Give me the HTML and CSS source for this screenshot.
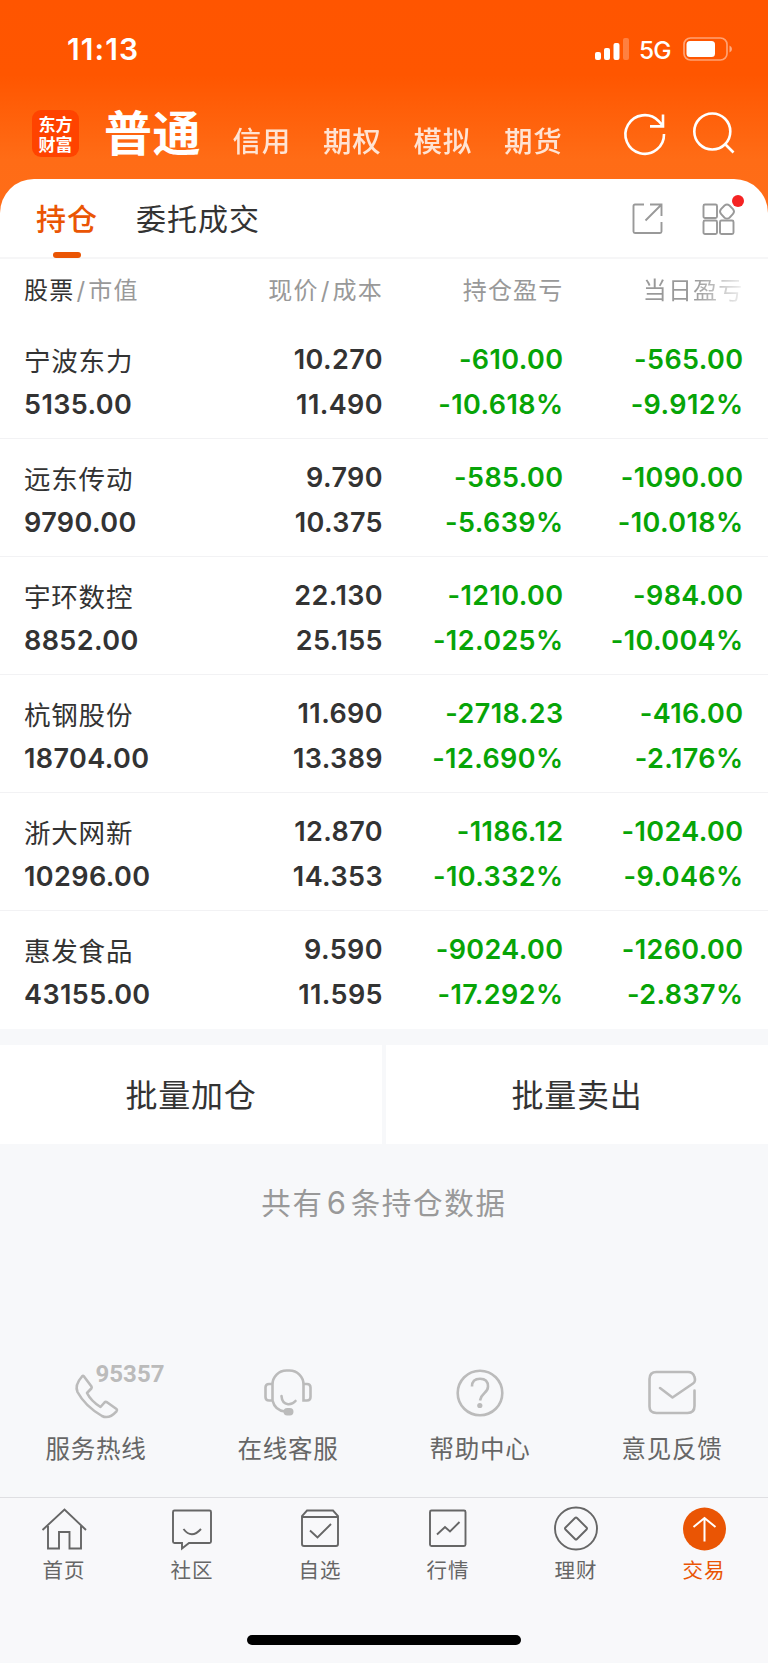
FILE: index.html
```html
<!DOCTYPE html>
<html lang="zh-CN">
<head>
<meta charset="utf-8">
<title>持仓</title>
<link rel="stylesheet" href="styles.css">
</head>
<body>
<header class="hero">
  <div class="status">
    <span class="clock">11:13</span>
    <svg class="signal" width="34" height="24" viewBox="0 0 34 24" fill="#fff"><rect x="0" y="15" width="6" height="8" rx="2"/><rect x="9" y="11" width="6" height="12" rx="2"/><rect x="18.500" y="6" width="6" height="17" rx="2"/><rect x="28" y="1" width="6" height="22" rx="2" opacity=".25"/></svg>
    <span class="net">5G</span>
    <svg class="battery" width="50" height="24" viewBox="0 0 50 24"><rect x="1" y="1" width="43" height="22" rx="6.500" fill="none" stroke="#fff" stroke-width="1.700" opacity=".45"/><rect x="3.500" y="4" width="28.500" height="16" rx="3.500" fill="#fff"/><path d="M46.500 8.500Q49 9.500 49 12T46.500 15.500Z" fill="#fff" opacity=".5"/></svg>
  </div>
  <nav class="accounts">
    <div class="brand"><span>东方</span><span>财富</span></div>
    <span class="account current">普通</span>
    <span class="account">信用</span>
    <span class="account">期权</span>
    <span class="account">模拟</span>
    <span class="account">期货</span>
    <svg class="refresh" width="42" height="42" viewBox="0 0 42 42" fill="none" stroke="#fff" stroke-width="2.600"><path d="M40 21A19.300 19.300 0 1 1 34.500 8L39 13M39 1.500V13.400H26"/></svg>
    <svg class="search" width="42" height="42" viewBox="0 0 42 42" fill="none" stroke="#fff" stroke-width="2.600"><circle cx="19.300" cy="19.500" r="18"/><path d="M32 32L40.500 40.500"/></svg>
  </nav>
</header>
<main class="sheet">
  <div class="tabs">
    <span class="tab active">持仓</span>
    <span class="tab">委托成交</span>
    <svg class="export" width="32" height="32" viewBox="0 0 32 32" fill="none" stroke="#999" stroke-width="1.900"><path d="M12 1.500H3Q1.500 1.500 1.500 3V28.500Q1.500 30 3 30H28Q29.500 30 29.500 28.500V19M18 1.500H29.500V13M29.500 1.500L13.500 17.500"/></svg>
    <div class="widgets">
      <svg width="34" height="34" viewBox="0 0 34 34" fill="none" stroke="#999" stroke-width="1.900"><rect x="1.500" y="2.500" width="13.500" height="13.500" rx="1.500"/><rect x="1.500" y="18.500" width="13.500" height="13.500" rx="1.500"/><rect x="18" y="18.500" width="13.500" height="13.500" rx="1.500"/><path d="M22.500 3.500Q25 1.500 27.500 3.500L31 7.200Q33 9.500 31 12L27.500 15.700Q25 17.500 22.500 15.700L19 12Q17 9.500 19 7.200Z"/></svg>
      <i class="dot"></i>
    </div>
  </div>
  <div class="grid head">
    <span><b>股票</b><i>/</i>市值</span><span>现价<i>/</i>成本</span><span>持仓盈亏</span><span class="fade">当日盈亏</span>
  </div>
  <div class="grid row"><div><p class="name">宁波东力</p><p>5135.00</p></div><div><p>10.270</p><p>11.490</p></div><div class="loss"><p>-610.00</p><p>-10.618%</p></div><div class="loss"><p>-565.00</p><p>-9.912%</p></div></div>
  <div class="grid row"><div><p class="name">远东传动</p><p>9790.00</p></div><div><p>9.790</p><p>10.375</p></div><div class="loss"><p>-585.00</p><p>-5.639%</p></div><div class="loss"><p>-1090.00</p><p>-10.018%</p></div></div>
  <div class="grid row"><div><p class="name">宇环数控</p><p>8852.00</p></div><div><p>22.130</p><p>25.155</p></div><div class="loss"><p>-1210.00</p><p>-12.025%</p></div><div class="loss"><p>-984.00</p><p>-10.004%</p></div></div>
  <div class="grid row"><div><p class="name">杭钢股份</p><p>18704.00</p></div><div><p>11.690</p><p>13.389</p></div><div class="loss"><p>-2718.23</p><p>-12.690%</p></div><div class="loss"><p>-416.00</p><p>-2.176%</p></div></div>
  <div class="grid row"><div><p class="name">浙大网新</p><p>10296.00</p></div><div><p>12.870</p><p>14.353</p></div><div class="loss"><p>-1186.12</p><p>-10.332%</p></div><div class="loss"><p>-1024.00</p><p>-9.046%</p></div></div>
  <div class="grid row"><div><p class="name">惠发食品</p><p>43155.00</p></div><div><p>9.590</p><p>11.595</p></div><div class="loss"><p>-9024.00</p><p>-17.292%</p></div><div class="loss"><p>-1260.00</p><p>-2.837%</p></div></div>
</main>
<div class="batch"><span>批量加仓</span><span>批量卖出</span></div>
<p class="summary">共有<span>6</span>条持仓数据</p>
<section class="services">
  <div class="service">
    <svg class="hotline" width="92" height="60" viewBox="0 0 92 60" fill="none" stroke="#bbb" stroke-width="2.600" stroke-linejoin="round"><path d="M7 18.500Q8 17.500 9 18.500L16.500 28.500Q17 29.500 16.300 30.500L12 35Q16 43 25.500 49L29.500 44.500Q30.500 43.500 32 44.200L41.500 51Q42.500 52 41.500 53.300Q34 61.500 27 58Q10 48 2.500 34Q-.5 27 7 18.500Z"/><text class="phone-no" x="20.500" y="24" textLength="69">95357</text></svg>
    <span>服务热线</span>
  </div>
  <div class="service">
    <svg width="50" height="50" viewBox="0 0 50 50" fill="none" stroke="#bbb" stroke-width="2.600"><path d="M9.500 32.500V16.500A14 14 0 0 1 23.500 2.500H26.500A14 14 0 0 1 40.500 16.500V32.500H44Q47.500 32.500 47.500 29V19.500Q47.500 16 44 16H40.500M9.500 16H6Q2.500 16 2.500 19.500V29Q2.500 32.500 6 32.500H9.500Q12 42.500 22 43.500"/><path d="M18.500 28Q19 35.500 25 36.200Q29.500 36.500 32.500 33" stroke-linecap="round"/><rect x="20.500" y="40" width="10" height="7.500" rx="3.700" fill="#bbb" stroke="none"/></svg>
    <span>在线客服</span>
  </div>
  <div class="service">
    <svg width="50" height="50" viewBox="0 0 50 50" fill="none" stroke="#bbb" stroke-width="2.600"><circle cx="25" cy="25" r="22.300"/><path d="M17 18.500Q17 10.800 25 10.800T33 18.500Q33 22 29.500 25T25 32.500"/><circle cx="24.800" cy="37.500" r="2.600" fill="#bbb" stroke="none"/></svg>
    <span>帮助中心</span>
  </div>
  <div class="service">
    <svg width="50" height="50" viewBox="0 0 50 50" fill="none" stroke="#bbb" stroke-width="2.600" stroke-linecap="round" stroke-linejoin="round"><path d="M13 20L25.500 29.500L46 15.500Q49 13.500 47.500 9Q46 4 41 4H9.500Q2.500 4 2.500 11V38.500Q2.500 45 9.500 45H40.500Q47.500 45 47.500 38V22.500"/></svg>
    <span>意见反馈</span>
  </div>
</section>
<footer class="dock">
  <nav class="dock-items">
    <div class="item"><svg width="46" height="46" viewBox="0 0 46 46"><path d="M1.500 24L23.500 3.500L45 24M7 20V42.500H18V26H28.500V42.500H40V20"/></svg><span>首页</span></div>
    <div class="item"><svg width="46" height="46" viewBox="0 0 46 46"><path d="M5.500 4.500H40.500Q42 4.500 42 6V35.500Q42 37 40.500 37H20L13 42.500V37H5.500Q4 37 4 35.500V6Q4 4.500 5.500 4.500Z"/><path d="M14.500 23Q22.500 33.500 32 23"/></svg><span>社区</span></div>
    <div class="item"><svg width="46" height="46" viewBox="0 0 46 46"><path d="M10 4.500H36L41 10V38Q41 40 39 40H7Q5 40 5 38V10ZM5 11H41M13 24.500L20.500 31.500L34 18"/></svg><span>自选</span></div>
    <div class="item"><svg width="46" height="46" viewBox="0 0 46 46"><rect x="5" y="4.500" width="35.500" height="35.500" rx="1.500"/><path d="M12 28.500L20 21L25 25.500L34.500 16"/></svg><span>行情</span></div>
    <div class="item"><svg width="46" height="46" viewBox="0 0 46 46"><circle cx="23" cy="22.500" r="21"/><path d="M22 12L12.500 21.500Q11.500 22.500 12.500 23.500L22 33Q23 34 24 33L33.500 23.500Q34.500 22.500 33.500 21.500L24 12Q23 11 22 12Z"/></svg><span>理财</span></div>
    <div class="item on"><svg width="46" height="46" viewBox="0 0 46 46"><circle cx="23.500" cy="23" r="21.500" fill="#ea5504" stroke="none"/><path d="M23.500 35.500V12M12.500 21L23.500 12L34.500 21" stroke="#fff" stroke-width="2"/></svg><span>交易</span></div>
  </nav>
  <div class="home-bar"></div>
</footer>
</body>
</html>
```
FILE: styles.css
```css
* { box-sizing: border-box; }
body {
  margin: 0;
  width: 768px;
  height: 1663px;
  overflow: hidden;
  background: #f7f8fa;
  color: #333;
  font-family: Inter, "Noto Sans CJK SC", sans-serif;
  white-space: nowrap;
}
p { margin: 0; }
i { font-style: normal; }
svg { display: block; flex: none; overflow: visible; }

.hero {
  height: 220px;
  background: linear-gradient(#ff5500 0, #ff5600 75px, #ff6c16 160px, #ff6d18 220px);
  color: #fff;
}
.status {
  height: 98px;
  display: flex;
  align-items: center;
  padding-left: 67px;
}
.clock { width: 528px; font-size: 30px; font-weight: 600; letter-spacing: 1.100px; }
.signal { margin-right: 10px; }
.net { width: 44px; font-size: 24.500px; font-weight: 500; letter-spacing: -1px; padding-top: 2px; }
.accounts { height: 82px; display: flex; align-items: flex-start; padding-left: 32px; }
.brand {
  width: 47px;
  height: 47px;
  margin: 12px 25px 0 0;
  padding-top: 4px;
  border-radius: 9px;
  background: #ff4300;
  display: flex;
  flex-direction: column;
  align-items: center;
  font-family: "Noto Sans CJK SC", sans-serif;
  font-size: 17px;
  font-weight: 700;
  line-height: 19.500px;
}
.account { width: 90.500px; font-size: 28.500px; font-weight: 500; letter-spacing: .8px; line-height: 40px; margin-top: 24px; opacity: .82; }
.account.current { width: 128.500px; font-size: 48px; font-weight: 700; letter-spacing: .5px; line-height: 60px; margin-top: 6px; opacity: 1; }
.refresh { margin: 15px 0 0 29.500px; }
.search { margin: 14px 0 0 27px; }

.sheet { margin-top: -41px; background: #fff; border-radius: 34px 34px 0 0; height: 850px; }
.tabs { height: 80px; display: flex; align-items: flex-start; padding-left: 36px; border-bottom: 2px solid #f6f6f7; }
.tab { width: 100px; font-size: 30px; letter-spacing: 1px; line-height: 40px; padding-top: 20px; }
.tab + .tab { width: 496px; }
.tab.active { height: 79px; color: #ea5504; font-weight: 500; }
.tab.active::after { content: ""; display: block; width: 28px; height: 6px; margin: 13px 0 0 17px; border-radius: 3px; background: #ea5504; }
.export { margin-top: 24px; }
.widgets { position: relative; margin: 23px 0 0 38px; }
.dot { position: absolute; right: -8px; top: -7px; width: 12px; height: 12px; border-radius: 50%; background: #f52323; }

.grid { display: grid; grid-template-columns: 199px 160px 180.500px 180px; padding-left: 24px; }
.grid > * { text-align: right; }
.grid > :first-child { text-align: left; }
.head { height: 62px; padding-top: 12px; font-size: 24px; line-height: 40px; color: #999; letter-spacing: 1.200px; }
.head b { color: #333; font-weight: 400; }
.head i { margin: 0 2px; }
.fade { background: linear-gradient(90deg, #999 72%, #e8e8e8 97%, #fff); -webkit-background-clip: text; background-clip: text; color: transparent; }
.row { height: 118px; padding-top: 17px; border-bottom: 1px solid #f2f2f4; font-size: 27px; font-weight: 600; line-height: 44.500px; letter-spacing: .4px; }
.row:last-child { border-bottom: 0; }
.name { font-size: 26.500px; font-weight: 400; letter-spacing: .8px; position: relative; top: 1px; }
.loss { color: #07a407; }

.batch { margin-top: 16px; display: grid; grid-template-columns: 1fr 1fr; gap: 4px; }
.batch span { height: 99px; background: #fff; text-align: center; font-size: 32px; letter-spacing: .8px; line-height: 101px; }
.summary { margin-top: 39px; text-align: center; font-size: 29.500px; letter-spacing: 1.700px; line-height: 40px; color: #999; }
.summary span { margin: 0 3px; font-size: 31px; }
.services { margin-top: 144px; display: grid; grid-template-columns: repeat(4, 192px); height: 130px; }
.service { display: flex; flex-direction: column; align-items: center; font-size: 24.500px; letter-spacing: .8px; line-height: 36px; color: #666; }
.service svg { margin: 1px 0 13px; }
.service .hotline { margin: -9px 0 13px 50px; }
.phone-no { font: 700 24px Roboto, sans-serif; fill: #bbb; stroke: none; letter-spacing: 0; }

.dock { height: 165px; border-top: 1px solid #dfdfe2; background: #f8f8fa; }
.dock-items { display: grid; grid-template-columns: repeat(6, 128px); padding-top: 8px; }
.item { display: flex; flex-direction: column; align-items: center; font-size: 20.500px; letter-spacing: 1px; line-height: 30px; color: #666; gap: 4px; }
.item svg { fill: none; stroke: #666; stroke-width: 1.900; }
.item.on { color: #ea5504; }
.home-bar { width: 274px; height: 10px; margin: 49px auto 0; border-radius: 5px; background: #000; }
```
